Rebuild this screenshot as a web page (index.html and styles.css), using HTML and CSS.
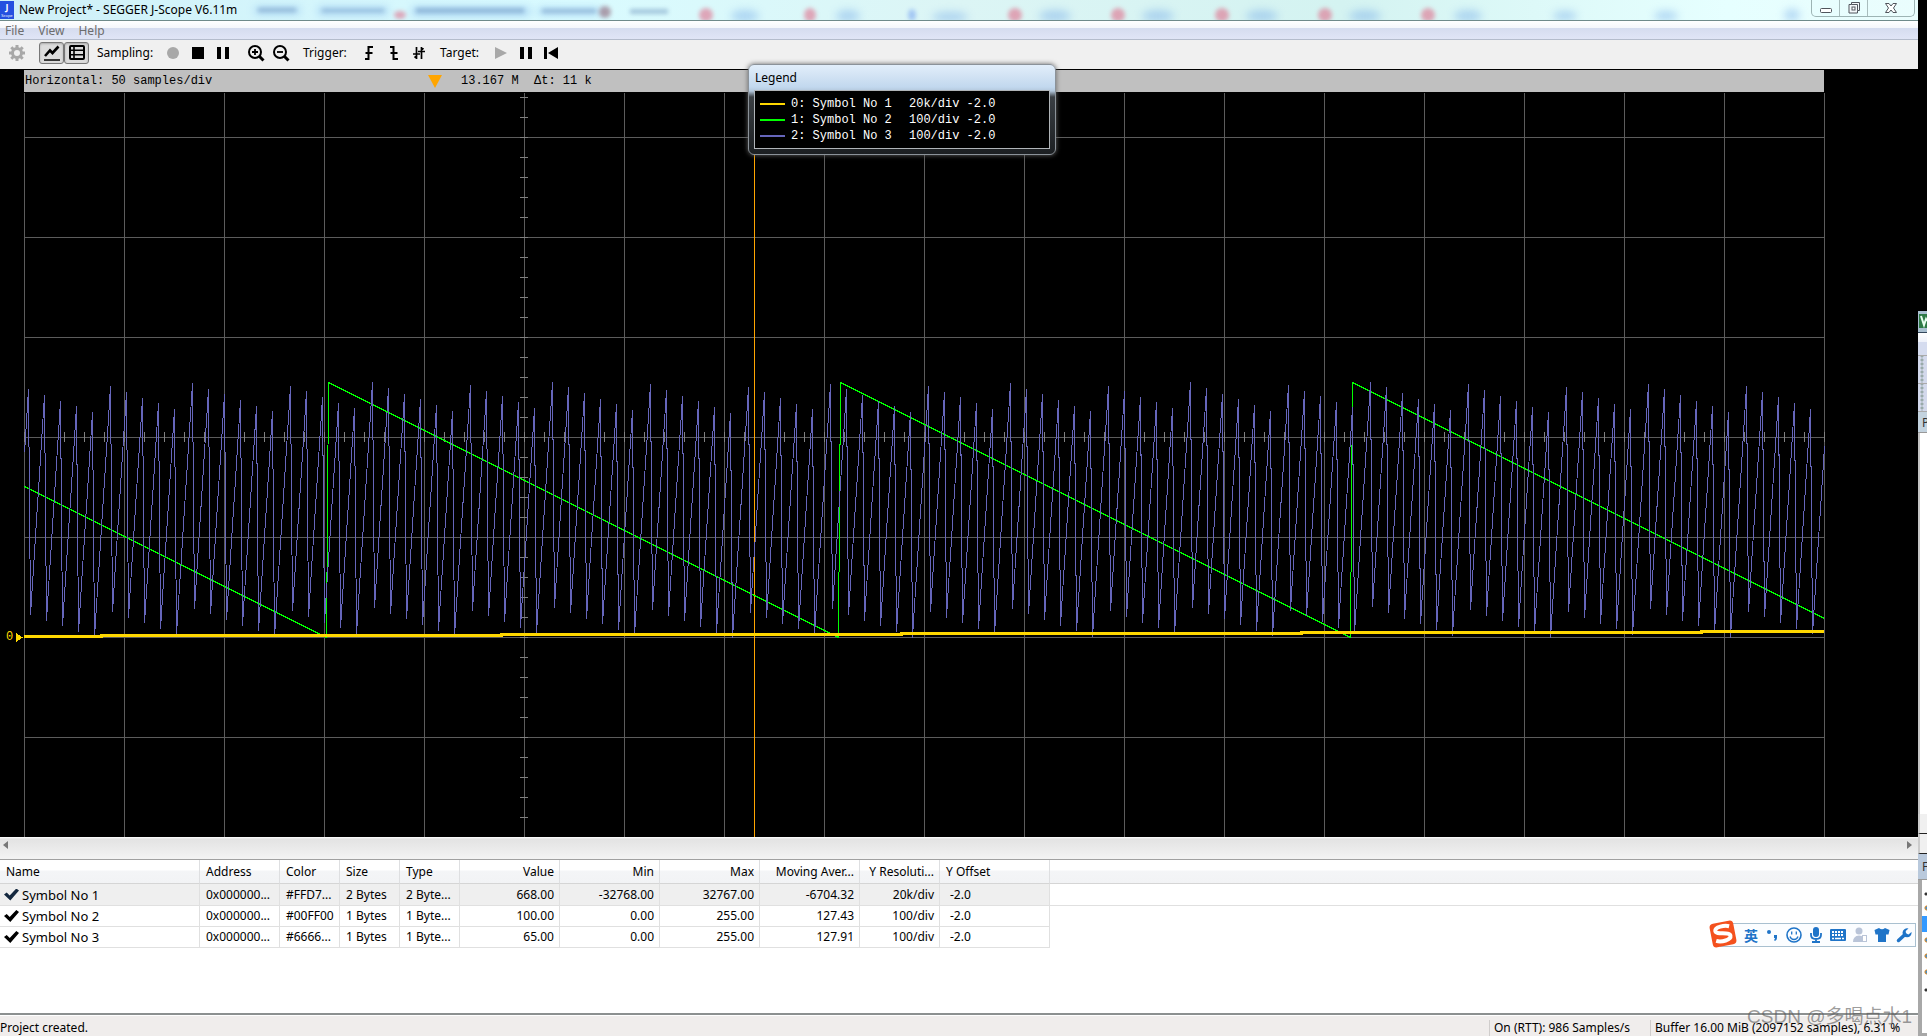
FILE: index.html
```html
<!DOCTYPE html>
<html lang="en">
<head>
<meta charset="utf-8">
<title>New Project* - SEGGER J-Scope V6.11m</title>
<link rel="stylesheet" href="styles.css">
</head>
<body>
<div class="app">
  <header class="titlebar">
    <svg class="glass" aria-hidden="true">
      <defs><filter id="soft" x="-50%" y="-100%" width="200%" height="300%"><feGaussianBlur stdDeviation="4"/></filter>
      <filter id="soft2" x="-50%" y="-100%" width="200%" height="300%"><feGaussianBlur stdDeviation="2"/></filter></defs>
      <g filter="url(#soft)" fill="#7fb2ea" opacity=".5">
        <rect x="255" y="7" width="45" height="7"/><rect x="318" y="7" width="70" height="8"/><rect x="412" y="7" width="118" height="9"/><rect x="538" y="8" width="62" height="7"/>
        <ellipse cx="745" cy="16" rx="14" ry="6"/><ellipse cx="848" cy="16" rx="12" ry="6"/><ellipse cx="950" cy="17" rx="18" ry="5"/><ellipse cx="1055" cy="16" rx="16" ry="6"/><ellipse cx="1158" cy="16" rx="16" ry="6"/><ellipse cx="1262" cy="16" rx="16" ry="6"/><ellipse cx="1365" cy="16" rx="16" ry="6"/><ellipse cx="1468" cy="16" rx="14" ry="6"/><ellipse cx="1565" cy="16" rx="12" ry="5"/><ellipse cx="1666" cy="16" rx="12" ry="5"/><ellipse cx="1792" cy="15" rx="8" ry="6"/>
      </g>
      <g filter="url(#soft2)" fill="#5f86b4" opacity=".45">
        <rect x="258" y="8" width="38" height="4"/><rect x="322" y="9" width="62" height="3"/><rect x="416" y="8" width="108" height="5"/><rect x="542" y="9" width="54" height="4"/><rect x="630" y="9" width="38" height="5"/><ellipse cx="912" cy="15" rx="4" ry="6" fill="#5b8cf0"/>
      </g>
      <g filter="url(#soft2)" fill="#e0708c" opacity=".6">
        <ellipse cx="400" cy="15" rx="6" ry="4"/><ellipse cx="605" cy="12" rx="6" ry="6" fill="#8c6074"/><ellipse cx="706" cy="15" rx="7" ry="7"/><ellipse cx="810" cy="15" rx="6" ry="7"/><ellipse cx="1015" cy="15" rx="7" ry="7"/><ellipse cx="1118" cy="15" rx="7" ry="7"/><ellipse cx="1222" cy="15" rx="7" ry="7"/><ellipse cx="1325" cy="15" rx="7" ry="7"/><ellipse cx="1428" cy="15" rx="7" ry="7"/>
      </g>
    </svg>
    <span class="logo"><b>J</b><i>Scope</i></span>
    <h1>New Project* - SEGGER J-Scope V6.11m</h1>
    <div class="winbtns">
      <button aria-label="Minimize"><svg width="14" height="14" viewBox="0 0 14 14"><rect x="1.500" y="7.500" width="11" height="4" rx="1" fill="#fff" stroke="#50555c"/></svg></button>
      <button aria-label="Restore"><svg width="14" height="14" viewBox="0 0 14 14"><path d="M4.500 1.500h8v8h-2v2.500h-8.500v-8.500h2.500z" fill="#f4f8fa" stroke="#50555c"/><path d="M4.500 3.500h6v6" fill="none" stroke="#50555c"/><rect x="5" y="6" width="3" height="3" fill="#fff" stroke="#50555c"/></svg></button>
      <button class="close" aria-label="Close"><svg width="14" height="14" viewBox="0 0 14 14"><path d="M1.500 2.500h3.500l2 2.500 2-2.500h3.500l-3 4.500 3 4.500h-3.500l-2-2.500-2 2.500h-3.500l3-4.500z" fill="#fff" stroke="#50555c"/></svg></button>
    </div>
  </header>
  <nav class="menu"><a href="#file">File</a><a href="#view">View</a><a href="#help">Help</a></nav>
  <div class="toolbar">
    <button class="tool gear" aria-label="Settings"><svg width="18" height="18" viewBox="-9 -9 18 18"><circle r="4.500" fill="none" stroke="#a8a8a8" stroke-width="3"/><g stroke="#a8a8a8" stroke-width="3"><path d="M0-8V-5M0 8V5M-8 0H-5M8 0H5M-5.700-5.700L-3.500-3.500M5.700 5.700L3.500 3.500M-5.700 5.700L-3.500 3.500M5.700-5.700L3.500-3.500"/></g></svg></button>
    <button class="tool toggle" aria-label="Graph"><svg width="18" height="18" viewBox="0 0 18 18" fill="none" stroke="#000"><path d="M1 16H17" stroke-width="1.500"/><path d="M2 12L7 6.500L9.500 9L15.500 2.500" stroke-width="2.600"/></svg></button>
    <button class="tool toggle" aria-label="List"><svg width="18" height="18" viewBox="0 0 18 18" fill="none" stroke="#000" stroke-width="2"><rect x="2" y="2" width="14" height="13" rx="1"/><path d="M6 2V15M2 6.300H16M2 10.700H16" stroke-width="1.600"/></svg></button>
    <span class="label l1">Sampling:</span>
    <button class="tool" aria-label="Record"><svg width="14" height="14" viewBox="0 0 14 14"><circle cx="7" cy="7" r="6" fill="#a8a8a8"/></svg></button>
    <button class="tool" aria-label="Stop"><svg width="14" height="14" viewBox="0 0 14 14"><path d="M1 1h12v12H1z"/></svg></button>
    <button class="tool" aria-label="Pause"><svg width="14" height="14" viewBox="0 0 14 14"><path d="M1 1h4v12H1zM9 1h4v12H9z"/></svg></button>
    <button class="tool zoom" aria-label="Zoom in"><svg width="18" height="18" viewBox="0 0 18 18" fill="none" stroke="#000"><circle cx="8" cy="8" r="6" stroke-width="2"/><path d="M12 12l4.500 4.500" stroke-width="3"/><path d="M8 5v6M5 8h6" stroke-width="1.800"/></svg></button>
    <button class="tool" aria-label="Zoom out"><svg width="18" height="18" viewBox="0 0 18 18" fill="none" stroke="#000"><circle cx="8" cy="8" r="6" stroke-width="2"/><path d="M12 12l4.500 4.500" stroke-width="3"/><path d="M5 8h6" stroke-width="1.800"/></svg></button>
    <span class="label l2">Trigger:</span>
    <button class="tool" aria-label="Rising edge"><svg width="14" height="14" viewBox="0 0 14 14" fill="none" stroke="#000" stroke-width="2"><path d="M3 13h3.500V1H11M3.500 7h7"/></svg></button>
    <button class="tool" aria-label="Falling edge"><svg width="14" height="14" viewBox="0 0 14 14" fill="none" stroke="#000" stroke-width="2"><path d="M3 1h3.500V13H11M3.500 7h7"/></svg></button>
    <button class="tool" aria-label="Both edges"><svg width="14" height="14" viewBox="0 0 14 14" fill="none" stroke="#000" stroke-width="1.700"><path d="M4.500 1V13M9.500 1V13M1 8h7M6 5.500h7M9.500 1.800l2 1.500M4.500 12l-2-1.500"/></svg></button>
    <span class="label l3">Target:</span>
    <button class="tool" aria-label="Run"><svg width="14" height="14" viewBox="0 0 14 14"><path d="M1 1L13 7L1 13z" fill="#a8a8a8"/></svg></button>
    <button class="tool" aria-label="Halt"><svg width="14" height="14" viewBox="0 0 14 14"><path d="M1 1h4v12H1zM9 1h4v12H9z"/></svg></button>
    <button class="tool" aria-label="Reset"><svg width="14" height="14" viewBox="0 0 14 14"><path d="M0 1h3v12H0zM14 1v12L4 7z"/></svg></button>
  </div>
  <main class="scope">
    <div class="info">
      <span class="horiz">Horizontal: 50 samples/div</span>
      <svg class="mark" width="14" height="13" viewBox="0 0 14 13"><path d="M0 0h14L7 13z" fill="#ffa500"/></svg>
      <span class="pos">13.167 M</span><span><b>Δ</b>t: 11 k</span>
    </div>
    <svg class="plot" id="plot" role="img" aria-label="Samples over time"></svg>
    <section class="legend">
      <h2>Legend</h2>
      <ul>
        <li><i class="k0"></i><span>0: Symbol No 1</span><span>20k/div -2.0</span></li>
        <li><i class="k1"></i><span>1: Symbol No 2</span><span>100/div -2.0</span></li>
        <li><i class="k2"></i><span>2: Symbol No 3</span><span>100/div -2.0</span></li>
      </ul>
    </section>
  </main>
  <div class="scroll">
    <button aria-label="Scroll left"><svg width="5" height="8" viewBox="0 0 5 8"><path d="M5 0v8L0 4z" fill="#777"/></svg></button>
    <button aria-label="Scroll right"><svg width="5" height="8" viewBox="0 0 5 8"><path d="M0 0v8l5-4z" fill="#777"/></svg></button>
  </div>
  <section class="list">
    <table>
      <colgroup><col class="w200"><col class="w80"><col class="w60"><col class="w60"><col class="w60"><col class="w100"><col class="w100"><col class="w100"><col class="w100"><col class="w80"><col class="w110"><col></colgroup>
      <thead><tr><th>Name</th><th>Address</th><th>Color</th><th>Size</th><th>Type</th><th class="r">Value</th><th class="r">Min</th><th class="r">Max</th><th class="r">Moving Aver...</th><th class="r">Y Resoluti...</th><th>Y Offset</th><th></th></tr></thead>
      <tbody>
        <tr class="sel"><td class="name"><label><input type="checkbox" checked>Symbol No 1</label></td><td>0x000000...</td><td>#FFD7...</td><td>2 Bytes</td><td>2 Byte...</td><td class="r">668.00</td><td class="r">-32768.00</td><td class="r">32767.00</td><td class="r">-6704.32</td><td class="r">20k/div</td><td class="off">-2.0</td><td></td></tr>
        <tr><td class="name"><label><input type="checkbox" checked>Symbol No 2</label></td><td>0x000000...</td><td>#00FF00</td><td>1 Bytes</td><td>1 Byte...</td><td class="r">100.00</td><td class="r">0.00</td><td class="r">255.00</td><td class="r">127.43</td><td class="r">100/div</td><td class="off">-2.0</td><td></td></tr>
        <tr><td class="name"><label><input type="checkbox" checked>Symbol No 3</label></td><td>0x000000...</td><td>#6666...</td><td>1 Bytes</td><td>1 Byte...</td><td class="r">65.00</td><td class="r">0.00</td><td class="r">255.00</td><td class="r">127.91</td><td class="r">100/div</td><td class="off">-2.0</td><td></td></tr>
      </tbody>
    </table>
  </section>
  <footer class="status"><span class="msg">Project created.</span><span class="rate">On (RTT): 986 Samples/s</span><span class="buf">Buffer 16.00 MiB (2097152 samples), 6.31 %</span></footer>
</div>
<aside class="behind">
  <div class="b-title"><svg width="9" height="16" viewBox="0 0 9 16"><rect x="1" y="1" width="14" height="14" fill="#2f7a46"/><path d="M3 3L6 12L8 6L9 8" fill="none" stroke="#e8fff0" stroke-width="2"/></svg></div>
  <div class="b-menu"></div>
  <div class="b-bar"></div>
  <div class="b-bar"></div>
  <div class="b-head">P</div>
  <div class="b-pane"></div>
  <div class="b-btn"></div>
  <div class="b-btn"></div>
  <div class="b-head two">F</div>
  <div class="b-list"><i class="dk"></i><i></i><i class="on"></i><i></i><i></i><i></i><i class="dk"></i></div>
</aside>
<div class="ime">
  <svg class="sogou" width="30" height="28" viewBox="0 0 30 28"><g transform="rotate(-11 15 14)"><rect x="3" y="2" width="24" height="24" rx="4" fill="#f4511e"/><path d="M22.500 7.500C18 5.500 8.500 5.500 8 9.500C7.500 14 22 12.500 22 17C22 21.500 12 22 7 19.500" fill="none" stroke="#fff" stroke-width="4"/></g></svg>
  <button class="lang">英</button>
  <button aria-label="Punctuation"><svg width="16" height="16" viewBox="0 0 16 16"><circle cx="5" cy="5" r="2" fill="#1f74c8"/><path d="M10 8h3v3q0 2-2 3l-1-1q1-1 1-2h-1z" fill="#1f74c8"/></svg></button>
  <button aria-label="Emoji"><svg width="16" height="16" viewBox="0 0 16 16" fill="none" stroke="#1f74c8" stroke-width="1.600"><circle cx="8" cy="8" r="7"/><path d="M5.700 4.500v3M10.300 4.500v3M4 9.500q1 3 4 3T12 9.500" stroke-width="1.300"/></svg></button>
  <button aria-label="Voice"><svg width="16" height="16" viewBox="0 0 16 16"><rect x="5" y="0" width="6" height="10" rx="3" fill="#1f74c8"/><path d="M3 6v2q0 4 5 4t5-4V6M8 12v3M4 15h8" fill="none" stroke="#1f74c8" stroke-width="1.800"/></svg></button>
  <button aria-label="Keyboard"><svg width="16" height="16" viewBox="0 0 16 16"><rect x="0" y="2" width="16" height="12" rx="1" fill="#1f74c8"/><path d="M2 5h12M2 8h12" stroke="#fff" stroke-width="1.800" stroke-dasharray="2 1"/><path d="M2 11.500h2M5 11.500h6M12 11.500h2" stroke="#fff" stroke-width="1.500"/></svg></button>
  <button aria-label="Account"><svg width="16" height="16" viewBox="0 0 16 16"><circle cx="7" cy="4" r="3.500" fill="#b9c4d8"/><path d="M1 15q0-6 6-6.500q6 .5 6 6.500z" fill="#b9c4d8"/><rect x="10.500" y="8.500" width="4" height="6" fill="#fff" stroke="#b9c4d8"/></svg></button>
  <button aria-label="Skin"><svg width="16" height="16" viewBox="0 0 16 16"><path d="M5 1q3 2.500 6 0l4.500 2-1 4.500H12V15H4V7.500H1.500l-1-4.500z" fill="#1f74c8"/></svg></button>
  <button aria-label="Tools"><svg width="16" height="16" viewBox="0 0 16 16"><path d="M2.500 13.500L9 7.500" stroke="#1f74c8" stroke-width="3.500" stroke-linecap="round"/><path d="M12.500 1.500a4.500 4.500 0 1 0 3 3.500l-3 2.500-2.500-1-.3-2.500z" fill="#1f74c8"/></svg></button>
</div>
<div class="watermark">CSDN @多喝点水1</div>
<script src="plot.js"></script>
</body>
</html>
```
FILE: styles.css
```css
* { box-sizing: border-box; }
body { margin: 0; height: 100vh; display: flex; overflow: hidden; position: relative; background: #000; color: #000; font: 12px/16px "Noto Sans", "Noto Sans CJK SC", sans-serif; }
button { border: 0; padding: 0; margin: 0; background: none; font: inherit; color: inherit; display: inline-flex; align-items: center; justify-content: center; }
.app { flex: 1; min-width: 0; display: flex; flex-direction: column; }

.titlebar { position: relative; height: 21px; display: flex; align-items: center; background: linear-gradient(90deg, #cff0f8 0, #d9fbff 30%, #dcf5f5 50%, #d4f3f1 70%, #e6ffff 90%, #eafdfd 100%); border-bottom: 1px solid #6f8a8a; overflow: hidden; }
.glass { position: absolute; inset: 0; width: 100%; height: 100%; }
.logo { position: relative; width: 14px; height: 18px; background: #2450e0; color: #fff; display: flex; flex-direction: column; align-items: center; }
.logo b { font-size: 9px; line-height: 12px; }
.logo i { font-size: 4px; line-height: 6px; font-style: normal; }
.titlebar h1 { position: relative; margin: 0 0 0 5px; font-size: 12px; line-height: 20px; font-weight: 400; white-space: nowrap; }
.winbtns { position: relative; margin-left: auto; margin-right: 3px; align-self: flex-start; display: flex; border: 1px solid #9db4b4; border-top: 0; border-radius: 0 0 5px 5px; }
.winbtns button { width: 28px; height: 16px; border-right: 1px solid #a9bdbd; }
.winbtns .close { width: 46px; border-right: 0; }

.menu { height: 19px; padding: 2px 5px 0; display: flex; gap: 14px; background: linear-gradient(#fff 0, #f4f6fb 7px, #d5dcef 7px, #e0e5f6 100%); border-bottom: 1px solid #b4bccc; }
.menu a { color: #6d6d6d; text-decoration: none; }

.toolbar { height: 29px; display: flex; align-items: center; background: #f0f0f0; padding-left: 8px; padding-bottom: 4px; }
.tool { width: 25px; height: 22px; flex: none; }
.tool.gear { width: 18px; margin-right: 13px; }
.tool.toggle { border: 1px solid #777; border-radius: 3px; background: #dcdcdc; box-shadow: inset 0 1px 2px #aaa; }
.label { flex: none; }
.l1 { width: 71px; padding-left: 8px; }
.l2 { width: 63px; padding-left: 10px; }
.l3 { width: 57px; padding-left: 9px; }
.zoom { margin-left: 8px; }

.scope { flex: 1; min-height: 0; position: relative; display: flex; flex-direction: column; background: #000; border-top: 1px solid #000; }
.info { height: 22px; flex: none; margin: 0 94px 1px 24px; background: #c0c0c0; display: flex; align-items: center; font-family: "Liberation Mono", monospace; white-space: pre; }
.info b { font-weight: 400; }
.horiz { width: 404px; padding-left: 1px; }
.pos { width: 92px; padding-left: 19px; }
.plot { flex: 1; min-height: 0; width: 100%; display: block; }
.plot text { font: 12px "Liberation Mono", monospace; fill: #ffd700; }
.legend { position: absolute; left: 748px; top: -6px; width: 308px; height: 91px; padding: 0 5px 5px; border: 1px solid #8b9299; border-radius: 6px; background: linear-gradient(#e2eefa 0, #c2d8ee 22px, #b4c8dc 26px, #3a3f44 32px, #1c1f22 100%); box-shadow: 0 0 5px #666; display: flex; flex-direction: column; }
.legend h2 { margin: 0; padding: 5px 1px 4px; font-size: 12px; line-height: 16px; font-weight: 400; }
.legend ul { flex: 1; margin: 0; padding: 5px 5px 0; list-style: none; background: #000; border: 1px solid #b0b4b8; color: #fff; font: 12px/16px "Liberation Mono", monospace; }
.legend li { display: flex; align-items: center; }
.legend i { width: 25px; height: 2px; margin-right: 6px; }
.legend span { width: 118px; white-space: pre; }
.k0 { background: #ffd700; }
.k1 { background: #0f0; }
.k2 { background: #66b; }

.scroll { height: 22px; display: flex; justify-content: space-between; padding: 0 6px 6px 3px; background: linear-gradient(#fff 0, #e3e3e3 2px, #eee 16px, #f3f3f3 100%); }
.list { height: 156px; background: #fff; border-top: 1px solid #a0a0a0; border-bottom: 2px solid #8c9090; overflow: hidden; }
table { width: 100%; table-layout: fixed; border-collapse: separate; border-spacing: 0; }
.w200 { width: 200px; } .w110 { width: 110px; } .w100 { width: 100px; } .w80 { width: 80px; } .w60 { width: 60px; }
th { height: 24px; padding: 0 5px 0 6px; font-weight: 400; text-align: left; white-space: nowrap; overflow: hidden; background: linear-gradient(#fff 0, #fff 10px, #f4f5f7 11px, #f2f3f5 100%); border-right: 1px solid #dedfe1; border-bottom: 1px solid #d5d5d5; }
td { height: 21px; padding: 0 5px 0 6px; white-space: nowrap; overflow: hidden; border-right: 1px solid #e0e0e0; border-bottom: 1px solid #e0e0e0; }
tbody tr.sel td { height: 22px; background: #efefef; }
tbody td:last-child, tbody tr.sel td:last-child { background: #fff; border-right: 0; }
tbody tr:not(.sel) td:last-child { border-bottom: 0; }
th:last-child { border-right: 0; }
.r { text-align: right; }
td.off { padding-left: 10px; }
td.name { padding-left: 4px; font-size: 13px; }
td label { display: flex; align-items: center; }
td input { appearance: none; width: 15px; height: 12px; margin: 0 3px 0 0; background: #000; clip-path: polygon(0 50%, 18% 34%, 38% 58%, 82% 0, 100% 16%, 42% 100%); }
.sel input { background: #14283f; }

.status { height: 21px; display: flex; align-items: center; background: #f0edec; border-top: 1px solid #fff; padding-top: 4px; white-space: nowrap; }
.msg { flex: 1; }
.rate { width: 161px; padding-left: 4px; border-left: 1px solid #d0cdcc; }
.buf { width: 268px; padding-left: 4px; border-left: 1px solid #d0cdcc; }

.behind { width: 9px; flex: none; overflow: hidden; padding-top: 311px; display: flex; flex-direction: column; }
.b-title { height: 22px; padding-top: 2px; background: #a9bfd0; border-bottom: 1px solid #34485c; }
.b-title svg { display: block; }
.b-menu { height: 23px; background: linear-gradient(#fff, #eef1fa 9px, #d5dcef 9px); border-bottom: 1px solid #aaa; }
.b-bar { height: 28px; background: radial-gradient(circle at 4px 2px, #9aa 1px, transparent 2px) 0 2px / 9px 4px #d3d9ec; border: solid #aaa; border-width: 0 0 1px; }
.b-head { height: 21px; padding-left: 4px; line-height: 21px; background: #c3d3df; color: #333; border-bottom: 1px solid #999; }
.b-pane { flex: 1; background: #fff; border-left: 2px solid #c4c4c4; }
.b-btn { height: 20px; background: #f0f0f0; border-bottom: 1px solid #222; border-left: 2px solid #ccc; }
.b-head.two { height: 26px; line-height: 26px; background: #b9c9dc; }
.b-list { height: 156px; padding-top: 4px; background: #fff; border: solid #a8a8a8; border-width: 0 0 3px 4px; display: flex; flex-direction: column; }
.b-list i { height: 16px; background: radial-gradient(circle at 5px 8px, #4a90c8 1px, #d98a2b 2px, transparent 3px); }
.b-list .dk { background: radial-gradient(circle at 4px 10px, #333 1px, transparent 2px); }
.b-list .on { background: #3399ff; }

.ime { position: absolute; right: 11px; top: 923px; height: 24px; width: 196px; padding: 0 3px 0 0; display: flex; align-items: center; justify-content: space-between; background: #fbfdff; border: 1px solid #a9c0d0; border-left: 0; }
.sogou { margin: 0 0 2px -12px; flex: none; }
.ime .lang { color: #1f74c8; font: 700 14px/16px "Noto Sans CJK SC", sans-serif; }
.watermark { position: absolute; right: 15px; top: 1003px; font: 19px/28px "Liberation Sans", "Noto Sans CJK SC", sans-serif; color: rgba(90, 90, 90, .6); white-space: nowrap; }
```
FILE: plot.js
```js
// Draws the oscilloscope grid and the three traces; 50 samples per 100px division.
(function () {
  var svg = document.getElementById('plot');
  var LEFT = 24, DIV = 100, STEP = 2, TOP = 44, ZERO = 544;

  function line(x1, y1, x2, y2, color) {
    return '<path d="M' + x1 + ' ' + y1 + 'L' + x2 + ' ' + y2 + '" stroke="' + color + '"/>';
  }
  function trace(points, color, width) {
    return '<polyline fill="none" points="' + points.join(' ') + '" stroke="' + color + '" stroke-width="' + width + '"/>';
  }
  function draw() {
    var h = svg.clientHeight;
    var divs = Math.floor((svg.clientWidth - LEFT) / DIV);
    var right = LEFT + divs * DIV, out = '', i, x, y;
    for (i = 0; i <= divs; i++) { x = LEFT + i * DIV + 0.5; out += line(x, 0, x, h, '#5c5c5c'); }
    for (y = TOP; y < h - 20; y += DIV) out += line(LEFT, y + 0.5, right, y + 0.5, '#5c5c5c');
    for (x = LEFT; x <= right; x += 20) out += line(x + 0.5, TOP + 295, x + 0.5, TOP + 305, '#808080');
    for (y = 4; y < h; y += 20) out += line(LEFT + 496, y + 0.5, LEFT + 504, y + 0.5, '#808080');
    out += line(754.5, 0, 754.5, h, '#ffa500');

    var green = [], blue = [], n = (right - LEFT) / STEP;
    for (i = 0; i <= n; i++) {
      x = LEFT + i * STEP + 0.5;
      var g = (((151 - i) % 256) + 256) % 256;
      var b = Math.floor((185.5 + i * 31.296) % 256);
      green.push(x + ',' + (ZERO - g + 0.5));
      blue.push(x + ',' + (ZERO - b + 0.5));
    }
    out += trace(green, '#00ff00', 1) + trace(blue, '#6666bb', 1);

    var yellow = [LEFT + ',543.5'], level = 543.5;
    for (x = 101; x < right; x += 400) {
      yellow.push(x + ',' + level);
      level -= 1;
      yellow.push(x + ',' + level);
    }
    yellow.push(right + ',' + level);
    out += trace(yellow, '#ffd700', 3);
    out += '<text x="6" y="547">0</text><path d="M16 540v9l7-4.500z" fill="#ffd700"/>';
    svg.innerHTML = '<g shape-rendering="crispEdges">' + out + '</g>';
  }
  window.addEventListener('resize', draw);
  draw();
})();
```
